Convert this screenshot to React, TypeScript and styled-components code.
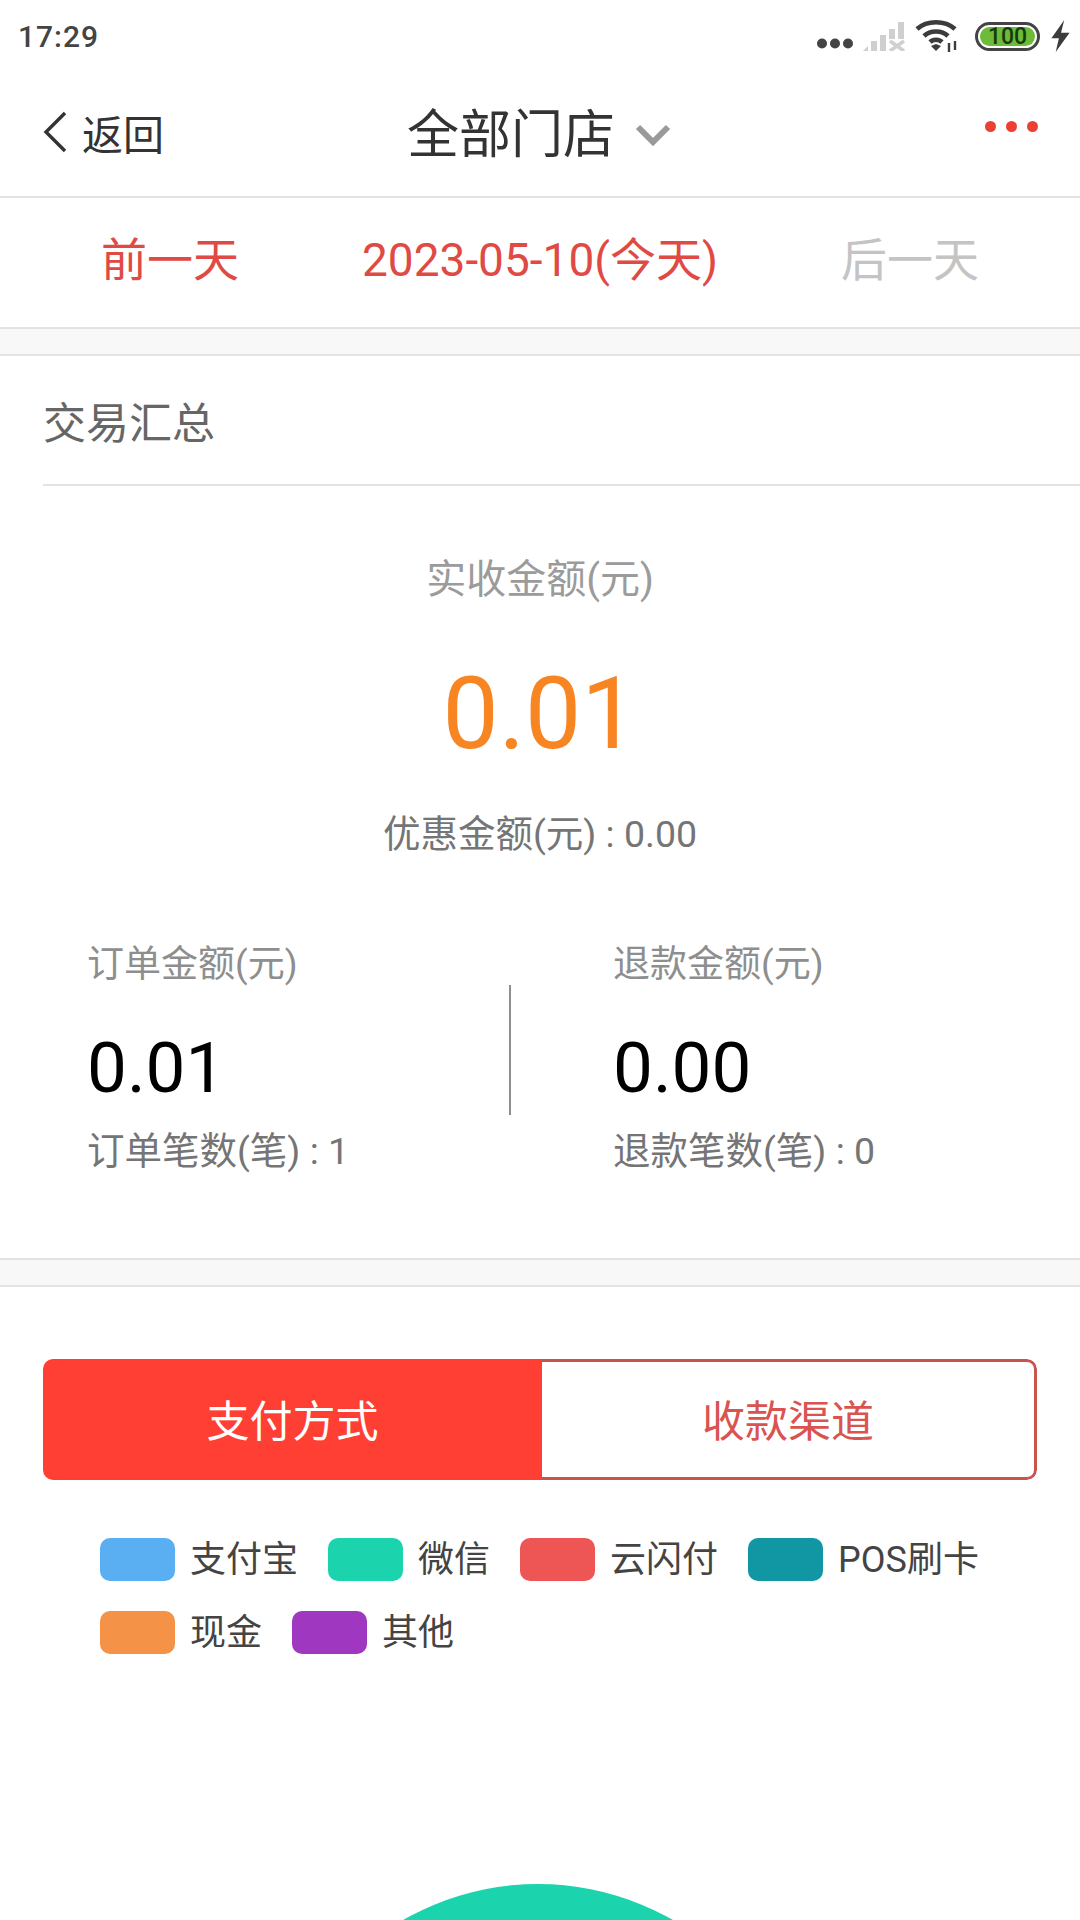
import React from 'react';
import styled, { createGlobalStyle } from 'styled-components';

const GlobalStyle = createGlobalStyle`
  html, body {
    margin: 0;
    padding: 0;
    background: #fff;
    font-family: Roboto, 'Noto Sans CJK SC', sans-serif;
  }
  * { box-sizing: border-box; }
`;

const legendItems = [
  { name: '支付宝', color: '#5aaef2' },
  { name: '微信', color: '#1bd4ad' },
  { name: '云闪付', color: '#ee5555' },
  { name: 'POS刷卡', color: '#1097a3' },
  { name: '现金', color: '#f49347' },
  { name: '其他', color: '#9f37c0' },
];

export default function App() {
  return (
    <Page>
      <GlobalStyle />
      <StatusBar>
        <Clock>17:29</Clock>
        <StatusIcons>
          <MoreDots />
          <SignalIcon />
          <WifiIcon />
          <Battery>
            <BatteryFill>100</BatteryFill>
          </Battery>
          <BoltIcon />
        </StatusIcons>
      </StatusBar>

      <NavBar>
        <BackLink>
          <svg width="26" height="42" viewBox="0 0 26 42" fill="none">
            <path d="M23 2 L4 21 L23 40" stroke="#333" strokeWidth="3.4" />
          </svg>
          <span>返回</span>
        </BackLink>
        <NavTitle>
          <span>全部门店</span>
          <svg width="36" height="22" viewBox="0 0 36 22" fill="none">
            <path d="M3 3 L18 18 L33 3" stroke="#9a9a9a" strokeWidth="6" />
          </svg>
        </NavTitle>
        <NavMore>
          <NavDot />
          <NavDot />
          <NavDot />
        </NavMore>
      </NavBar>

      <DateRow>
        <DateLink>前一天</DateLink>
        <DateLink>2023-05-10(今天)</DateLink>
        <DateLink $disabled>后一天</DateLink>
      </DateRow>
      <Spacer />

      <SectionTitle>
        <span>交易汇总</span>
      </SectionTitle>

      <Summary>
        <SummaryLabel>实收金额(元)</SummaryLabel>
        <SummaryValue>0.01</SummaryValue>
        <SummaryNote>优惠金额(元) : 0.00</SummaryNote>
      </Summary>

      <Stats>
        <StatColumn>
          <StatLabel>订单金额(元)</StatLabel>
          <StatValue>0.01</StatValue>
          <StatNote>订单笔数(笔) : 1</StatNote>
        </StatColumn>
        <StatDivider />
        <StatColumn>
          <StatLabel>退款金额(元)</StatLabel>
          <StatValue>0.00</StatValue>
          <StatNote>退款笔数(笔) : 0</StatNote>
        </StatColumn>
      </Stats>
      <Spacer />

      <Tabs>
        <Tab $active>支付方式</Tab>
        <Tab>收款渠道</Tab>
      </Tabs>

      <Legend>
        {legendItems.map((item) => (
          <LegendItem key={item.name}>
            <Swatch $color={item.color} />
            <LegendName>{item.name}</LegendName>
          </LegendItem>
        ))}
      </Legend>

      <Chart>
        <svg width="1080" height="36" viewBox="0 0 1080 36">
          <circle cx="538" cy="271" r="271" fill="#1bd4ad" />
        </svg>
      </Chart>
    </Page>
  );
}

function MoreDots() {
  return (
    <svg width="36" height="11" viewBox="0 0 36 11" fill="#444">
      <circle cx="5" cy="5.5" r="5" />
      <circle cx="18" cy="5.5" r="5" />
      <circle cx="31" cy="5.5" r="5" />
    </svg>
  );
}

function SignalIcon() {
  return (
    <svg width="42" height="30" viewBox="0 0 42 30" fill="#cfcfcf">
      <path d="M0 30 L5 25 V30 Z" />
      <rect x="8" y="20" width="6" height="10" />
      <rect x="17" y="14" width="6" height="16" />
      <rect x="26" y="8" width="6" height="10" />
      <rect x="35" y="1" width="6" height="17" />
      <path d="M27 20 L41 30 M41 20 L27 30" stroke="#cfcfcf" strokeWidth="3.6" />
    </svg>
  );
}

function WifiIcon() {
  return (
    <svg width="44" height="34" viewBox="0 0 44 34" fill="none" stroke="#3c3c3c" strokeWidth="4.6">
      <path d="M2 10 C12 1 30 1 40 10" />
      <path d="M9 17 C15 11 27 11 33 17" />
      <path d="M15 23 C18 20 24 20 27 23" />
      <path d="M16 27 L21 32 L26 27 L21 25 Z" fill="#3c3c3c" stroke="none" />
      <path d="M34 24 V33 M40 22 V31" strokeWidth="2.4" />
    </svg>
  );
}

function BoltIcon() {
  return (
    <svg width="21" height="32" viewBox="0 0 19 30" fill="#3c3c3c">
      <path d="M13 0 L1 17 H8 L5 30 L18 12 H10 Z" />
    </svg>
  );
}

const Page = styled.div`
  width: 1080px;
  height: 1920px;
  overflow: hidden;
  background: #fff;
  display: flex;
  flex-direction: column;
`;

const StatusBar = styled.div`
  height: 68px;
  padding: 0 9px 0 18px;
  display: flex;
  align-items: center;
  justify-content: space-between;
`;

const Clock = styled.div`
  font-size: 30px;
  font-weight: 500;
  letter-spacing: 1px;
  color: #444;
  margin-top: 4px;
`;

const StatusIcons = styled.div`
  display: flex;
  align-items: center;
  gap: 10px;
  margin-top: 4px;
  & > svg:first-child { margin-top: 14px; }
`;

const Battery = styled.div`
  width: 65px;
  height: 29px;
  margin: 0 0 0 6px;
  border: 3px solid #444;
  border-radius: 15px;
  padding: 2px;
  display: flex;
`;

const BatteryFill = styled.div`
  flex: 1;
  border-radius: 10px;
  background: #6dbb37;
  color: #143a10;
  font-size: 23px;
  line-height: 19px;
  text-align: center;
  font-weight: 500;
`;

const NavBar = styled.div`
  height: 130px;
  border-bottom: 2px solid #e3e3e3;
  display: grid;
  grid-template-columns: 1fr auto 1fr;
  align-items: center;
  padding: 0 42px;
`;

const BackLink = styled.div`
  display: flex;
  align-items: center;
  gap: 14px;
  font-size: 41px;
  color: #333;
`;

const NavTitle = styled.div`
  display: flex;
  align-items: center;
  gap: 20px;
  font-size: 52px;
  color: #333;
  padding-bottom: 4px;
  margin-left: -2px;
  & > svg { margin-top: 10px; }
`;

const NavMore = styled.div`
  justify-self: end;
  display: flex;
  gap: 10px;
  margin-bottom: 12px;
  margin-right: 0;
`;

const NavDot = styled.div`
  width: 11px;
  height: 11px;
  border-radius: 50%;
  background: #ec4034;
`;

const DateRow = styled.div`
  height: 129px;
  padding-bottom: 13px;
  display: grid;
  grid-template-columns: 340px 400px 340px;
  align-items: center;
  justify-items: center;
`;

const DateLink = styled.div<{ $disabled?: boolean }>`
  font-size: 46px;
  white-space: nowrap;
  color: ${(p) => (p.$disabled ? '#c4c4c4' : '#df4a44')};
`;

const Spacer = styled.div`
  height: 29px;
  flex-shrink: 0;
  background: #f8f8f8;
  border-top: 2px solid #e3e3e3;
  border-bottom: 2px solid #e3e3e3;
`;

const SectionTitle = styled.div`
  height: 130px;
  margin-left: 43px;
  border-bottom: 2px solid #e3e3e3;
  display: flex;
  align-items: center;
  font-size: 43px;
  color: #666;
`;

const Summary = styled.div`
  display: flex;
  flex-direction: column;
  align-items: center;
  padding-top: 68px;
`;

const SummaryLabel = styled.div`
  font-size: 40px;
  line-height: 52px;
  color: #9b9b9b;
`;

const SummaryValue = styled.div`
  font-size: 100px;
  line-height: 116px;
  margin-top: 50px;
  color: #f78522;
`;

const SummaryNote = styled.div`
  font-size: 37.5px;
  line-height: 48px;
  margin-top: 38px;
  color: #757575;
`;

const Stats = styled.div`
  height: 400px;
  padding: 83px 0 0 87px;
  display: flex;
  flex-shrink: 0;
`;

const StatColumn = styled.div`
  width: 422px;
  &:last-child { margin-left: 102px; }
`;

const StatLabel = styled.div`
  font-size: 37px;
  line-height: 48px;
  color: #8e8e8e;
`;

const StatValue = styled.div`
  font-size: 71px;
  line-height: 84px;
  margin-top: 37px;
  color: #000;
`;

const StatNote = styled.div`
  font-size: 37.5px;
  line-height: 48px;
  margin-top: 17px;
  color: #757575;
`;

const StatDivider = styled.div`
  width: 2px;
  height: 130px;
  margin-top: 44px;
  background: #8f8f8f;
`;

const Tabs = styled.div`
  height: 121px;
  flex-shrink: 0;
  margin: 72px 43px 0;
  border-radius: 10px;
  overflow: hidden;
  display: flex;
`;

const Tab = styled.div<{ $active?: boolean }>`
  display: flex;
  align-items: center;
  justify-content: center;
  padding-bottom: 3px;
  font-size: 43px;
  width: ${(p) => (p.$active ? '499px' : 'auto')};
  flex: ${(p) => (p.$active ? 'none' : '1')};
  background: ${(p) => (p.$active ? '#ff3f34' : '#fff')};
  color: ${(p) => (p.$active ? '#fff' : '#d9534f')};
  border: ${(p) => (p.$active ? 'none' : '3px solid #c9534d')};
  border-left: none;
  border-radius: ${(p) => (p.$active ? '0' : '0 10px 10px 0')};
`;

const Legend = styled.div`
  display: flex;
  flex-wrap: wrap;
  gap: 30px 30px;
  padding: 58px 60px 0 100px;
`;

const LegendItem = styled.div`
  display: flex;
  align-items: center;
  gap: 15px;
  height: 43px;
  font-size: 36px;
  color: #444;
`;

const LegendName = styled.span`
  margin-bottom: 7px;
`;

const Swatch = styled.div<{ $color: string }>`
  width: 75px;
  height: 43px;
  border-radius: 10px;
  background: ${(p) => p.$color};
`;

const Chart = styled.div`
  flex: 1;
  display: flex;
  align-items: flex-end;
  overflow: hidden;
  & > svg { flex-shrink: 0; display: block; }
`;
